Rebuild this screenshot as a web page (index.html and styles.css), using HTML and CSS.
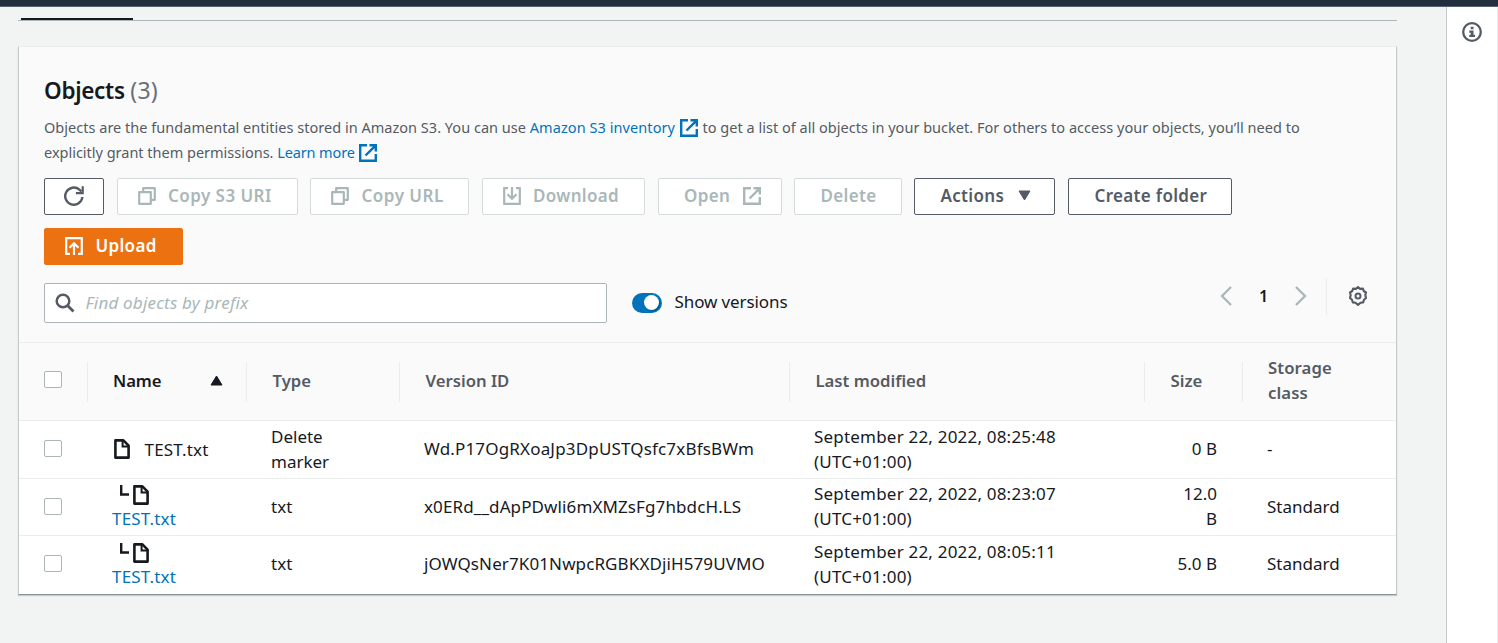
FILE: index.html
```html
<!DOCTYPE html>
<html lang="en">
<head>
<meta charset="utf-8">
<title>Objects</title>
<link rel="stylesheet" href="styles.css">
</head>
<body>
<svg class="defs" width="0" height="0">
  <symbol id="external" viewBox="0 0 18 18"><path d="M8 1.3H1.2v15.5h15.6V10M10.5 1.3h6.3v6.2M16.5 1.6L6.5 11.5" fill="none" stroke="currentColor" stroke-width="2.4"/></symbol>
  <symbol id="copy" viewBox="0 0 18 18"><path d="M1.2 5.2h11.6v11.6H1.2zM5.2 5V1.2h11.6v11.6H13" fill="none" stroke="currentColor" stroke-width="2.2" stroke-linejoin="round"/></symbol>
  <symbol id="file" viewBox="0 0 16 20"><path d="M1.4 1.4h8l5.2 5.2v12H1.4z" fill="none" stroke="currentColor" stroke-width="2.6" stroke-linejoin="round"/><path d="M8.6 1.5v6h6" fill="none" stroke="currentColor" stroke-width="2"/></symbol>
</svg>
<div class="topbar"></div>
<div class="layout">
  <main class="main">
    <div class="tabs"><div class="tab-active"></div></div>
    <section class="card">
      <div class="card-header">
        <h2 class="title">Objects <span class="count">(3)</span></h2>
        <p class="description"><span class="d1">Objects are the fundamental entities stored in Amazon S3. You can use </span><a class="link d2">Amazon S3 inventory <svg class="ext"><use href="#external"/></svg></a><span class="d3"> to get a list of all objects in your bucket. For others to access your objects, you’ll need to</span><br><span class="d4">explicitly grant them permissions. </span><a class="link d5">Learn more <svg class="ext"><use href="#external"/></svg></a></p>
        <div class="actions">
          <button class="btn refresh"><svg class="icon20" viewBox="0 0 20 20"><path d="M18.4 11a8.6 8.6 0 1 1-3-7.4l2 1.9" fill="none" stroke="currentColor" stroke-width="2.4"/><path d="M18.7.3v6.8h-6.8" fill="none" stroke="currentColor" stroke-width="2.2"/></svg></button>
          <button class="btn off copy-uri"><svg class="icon18"><use href="#copy"/></svg><span>Copy S3 URI</span></button>
          <button class="btn off copy-url"><svg class="icon18"><use href="#copy"/></svg><span>Copy URL</span></button>
          <button class="btn off download"><svg class="icon18" viewBox="0 0 18 18"><path d="M5 1.2H1.2v15.6h15.6V1.2H13M9 0v12M4.5 7.2L9 11.7l4.5-4.5" fill="none" stroke="currentColor" stroke-width="2.2"/></svg><span>Download</span></button>
          <button class="btn off open"><span>Open</span><svg class="icon18"><use href="#external"/></svg></button>
          <button class="btn off delete"><span>Delete</span></button>
          <button class="btn menu"><span>Actions</span><svg class="caret" viewBox="0 0 13 11"><path d="M1 1h11L6.5 10z" fill="currentColor" stroke="currentColor" stroke-linejoin="round"/></svg></button>
          <button class="btn create"><span>Create folder</span></button>
          <button class="btn primary"><svg class="icon18" viewBox="0 0 18 18"><path d="M5 16.8H1.2V1.2h15.6v15.6H13M9 18V6M4.5 10.8L9 6.3l4.5 4.5" fill="none" stroke="currentColor" stroke-width="2.2"/></svg><span>Upload</span></button>
        </div>
        <div class="filters">
          <div class="search"><svg class="icon20" viewBox="0 0 20 20"><circle cx="8" cy="8" r="6.3" fill="none" stroke="currentColor" stroke-width="2.5"/><path d="M12.5 12.5l6 6" stroke="currentColor" stroke-width="2.8"/></svg><span class="placeholder">Find objects by prefix</span></div>
          <div class="toggle"><span class="knob"></span></div>
          <span class="toggle-label">Show versions</span>
          <div class="paging">
            <svg class="chev" viewBox="0 0 12 20"><path d="M11 1L2 10l9 9" fill="none" stroke="currentColor" stroke-width="2.3"/></svg>
            <span class="page">1</span>
            <svg class="chev" viewBox="0 0 12 20"><path d="M1 1l9 9-9 9" fill="none" stroke="currentColor" stroke-width="2.3"/></svg>
            <div class="gear"><svg class="icon20" viewBox="0 0 20 20"><path d="M10 1.1l2.1 1.8 2.8-.3.8 2.4 2.3 1.5-.7 2.500.7 3-2 1.800-.8 2.600-2.700.3L10 18.900l-2.500-2.200-2.700-.3L4 13.800 2 12l.7-3L2 6.500 4.300 5l.8-2.400 2.800.3z" fill="none" stroke="currentColor" stroke-width="2.100" stroke-linejoin="round"/><circle cx="10" cy="10" r="2.500" fill="none" stroke="currentColor" stroke-width="2"/></svg></div>
          </div>
        </div>
      </div>
      <div class="table">
        <div class="row head">
          <div class="cell"><span class="check"></span></div>
          <div class="cell sorted"><span>Name</span><svg class="caret" viewBox="0 0 13 11"><path d="M1 10h11L6.5 1z" fill="currentColor" stroke="currentColor" stroke-linejoin="round"/></svg></div>
          <div class="cell">Type</div>
          <div class="cell">Version ID</div>
          <div class="cell">Last modified</div>
          <div class="cell">Size</div>
          <div class="cell">Storage<br>class</div>
        </div>
        <div class="row first">
          <div class="cell"><span class="check"></span></div>
          <div class="cell name"><svg class="file"><use href="#file"/></svg><span>TEST.txt</span></div>
          <div class="cell">Delete<br>marker</div>
          <div class="cell v1">Wd.P17OgRXoaJp3DpUSTQsfc7xBfsBWm</div>
          <div class="cell date">September 22, 2022, 08:25:48<br>(UTC+01:00)</div>
          <div class="cell size">0 B</div>
          <div class="cell">-</div>
        </div>
        <div class="row second">
          <div class="cell"><span class="check"></span></div>
          <div class="cell version"><div class="tree"><svg class="branch" viewBox="0 0 9 11"><path d="M1.2 0v9.5H9" fill="none" stroke="currentColor" stroke-width="2.4"/></svg><svg class="file"><use href="#file"/></svg></div><a class="link">TEST.txt</a></div>
          <div class="cell">txt</div>
          <div class="cell v2">x0ERd__dApPDwli6mXMZsFg7hbdcH.LS</div>
          <div class="cell date">September 22, 2022, 08:23:07<br>(UTC+01:00)</div>
          <div class="cell size">12.0<br>B</div>
          <div class="cell">Standard</div>
        </div>
        <div class="row third">
          <div class="cell"><span class="check"></span></div>
          <div class="cell version"><div class="tree"><svg class="branch" viewBox="0 0 9 11"><path d="M1.2 0v9.5H9" fill="none" stroke="currentColor" stroke-width="2.4"/></svg><svg class="file"><use href="#file"/></svg></div><a class="link">TEST.txt</a></div>
          <div class="cell">txt</div>
          <div class="cell v3">jOWQsNer7K01NwpcRGBKXDjiH579UVMO</div>
          <div class="cell date">September 22, 2022, 08:05:11<br>(UTC+01:00)</div>
          <div class="cell size">5.0 B</div>
          <div class="cell">Standard</div>
        </div>
      </div>
    </section>
  </main>
  <aside class="rail"><svg class="icon20" viewBox="0 0 20 20"><circle cx="10" cy="10" r="8.8" fill="none" stroke="currentColor" stroke-width="2.3"/><path d="M8.7 4.8h2.8v2.4H8.700zM7.300 8.500h4.200v4.200H13V15H7.300v-2.300h1.400v-2H7.300z" fill="currentColor"/></svg></aside>
</div>
</body>
</html>
```
FILE: styles.css
```css
* { box-sizing: border-box; }
body { margin: 0; height: 643px; overflow: hidden; display: flex; flex-direction: column; background: #f2f3f3; font: 17px/25px "Noto Sans", sans-serif; color: #16191f; white-space: nowrap; }
.defs { display: none; }
svg { flex: none; }
.topbar { height: 7px; background: #232f3e; border-bottom: 1px solid #596370; flex: none; }
.layout { display: flex; flex: 1; }
.main { flex: 1; padding: 11px 49px 0 18px; }
.tabs { height: 3px; border-bottom: 1px solid #aab7b8; padding-left: 3px; width: 1379px; }
.tab-active { width: 112px; height: 2px; background: #16191f; }
.card { margin-top: 25px; width: 1379px; height: 549px; border: 1px solid #c3cbcd; border-top-color: #eaeded; border-bottom: 1px solid #879596; box-shadow: 0 1px 1px #c5cccd; background: #fff; }
.card-header { height: 295px; background: #fafafa; padding: 27px 25px 0; }
.title { margin: 0; height: 32px; font-size: 22.5px; line-height: 32px; font-weight: 600; letter-spacing: -0.3px; }
.count { font-weight: 400; color: #687078; font-size: 23px; letter-spacing: 0.2px; }
.description { margin: 9px 0 0; height: 50px; font-size: 14.5px; line-height: 25px; letter-spacing: 0.02px; color: #545b64; }
.d2 { letter-spacing: 0.07px; }
.link { color: #0073bb; }
.ext { width: 18px; height: 18px; vertical-align: -4px; margin: 0 0.8px 0 1px; }
.d4 { letter-spacing: -0.01px; }
.d5 { letter-spacing: -0.13px; }
.actions { display: flex; flex-wrap: wrap; gap: 13px 12.5px; margin-top: 13px; }
.btn { height: 37px; padding: 0 0 2px; display: flex; align-items: center; background: #fff; border: 1px solid #545b64; border-radius: 2px; color: #545b64; font: 600 17px/25px "Noto Sans", sans-serif; letter-spacing: 0.32px; }
.btn.off { color: #aab7b8; border-color: #d5dbdb; }
.icon20 { width: 20px; height: 20px; }
.icon18 { width: 18px; height: 18px; }
.caret { width: 13px; height: 11px; }
.refresh { width: 60px; justify-content: center; }
.btn.copy-uri { width: 181px; letter-spacing: 0.45px; }
.btn.copy-url { width: 159px; letter-spacing: 0.5px; }
.download { width: 163.5px; }
.open { width: 124.5px; }
.delete { width: 107.5px; margin-left: -0.5px; }
.menu { width: 141px; }
.create { width: 164px; margin-left: 0.5px; }
.btn.primary { width: 139px; background: #ec7211; border-color: #ec7211; color: #fff; }
.copy-uri, .copy-url, .download, .primary { padding-left: 20px; gap: 12.5px; }
.open, .delete, .menu, .create { padding-left: 25.5px; }
.open { gap: 12.5px; }
.menu { gap: 14px; }
.filters { display: flex; margin-top: 18px; align-items: flex-start; }
.search { width: 563px; height: 40px; border: 1px solid #aab7b8; border-radius: 2px; background: #fff; display: flex; align-items: center; gap: 11px; padding-left: 9.5px; color: #545b64; }
.placeholder { font-style: italic; color: #aab7b8; letter-spacing: 0.2px; padding-bottom: 2px; }
.toggle { width: 30px; height: 20px; margin: 10px 12.5px 0 25px; padding: 2px 3px; border-radius: 10px; background: #0073bb; display: flex; justify-content: flex-end; }
.knob { width: 15px; height: 15px; border-radius: 50%; background: #fff; box-shadow: 1px 1px 1px #00558b; }
.toggle-label { margin-top: 6px; letter-spacing: -0.1px; }
.paging { margin-left: auto; margin-top: -5px; height: 37px; display: flex; align-items: center; color: #aab7b8; }
.paging > .chev, .page { margin-bottom: 1px; }
.chev { width: 12px; height: 20px; }
.page { width: 63px; text-align: center; font-weight: 600; font-size: 16px; color: #16191f; }
.gear { margin-left: 19px; height: 37px; border-left: 1px solid #eaeded; padding: 0 3px 2px 21px; display: flex; align-items: center; color: #545b64; }
.row { display: grid; grid-template-columns: 69px 159px 153px 390px 355px 98px 153px; align-items: center; border-top: 1px solid #eaeded; }
.head { height: 78px; background: #fafafa; color: #545b64; font-size: 16.7px; font-weight: 600; }
.first { height: 58px; }
.second { height: 57px; }
.third { height: 58px; }
.cell { padding: 0 0 2px 24px; }
.cell:first-child { padding-left: 25px; }
.head .cell { height: 40px; padding-left: 25.5px; padding-bottom: 3px; border-right: 1px solid #eaeded; display: flex; align-items: center; }
.head .cell:first-child { padding-left: 25px; padding-bottom: 4px; }
.head .cell:last-child { border-right: 0; padding-left: 25px; letter-spacing: 0.1px; }
.head .sorted { color: #16191f; justify-content: space-between; padding: 0 23.5px 2px 25px; letter-spacing: -0.1px; }
.check { display: block; width: 18px; height: 17px; border: 1px solid #aab7b8; border-radius: 2px; background: #fff; }
.name { display: flex; align-items: center; gap: 14.5px; padding: 0 0 1px 26px; letter-spacing: 0.2px; }
.v1 { letter-spacing: 0.17px; }
.v2, .v3 { letter-spacing: 0.11px; }
.date { letter-spacing: 0.2px; }
.file { width: 16px; height: 20px; }
.tree { display: flex; align-items: flex-start; height: 21px; gap: 4px; padding-left: 8px; margin-top: 3px; }
.branch { width: 9px; height: 11px; }
.version { letter-spacing: 0.2px; padding-bottom: 1px; }
.version .link { display: block; }
.size { text-align: right; padding-right: 26px; }
.rail { width: 52px; background: #fff; border-left: 1px solid #c3cbcd; border-right: 1px solid #eaeded; padding: 15px 0 0 15px; color: #545b64; }
```
